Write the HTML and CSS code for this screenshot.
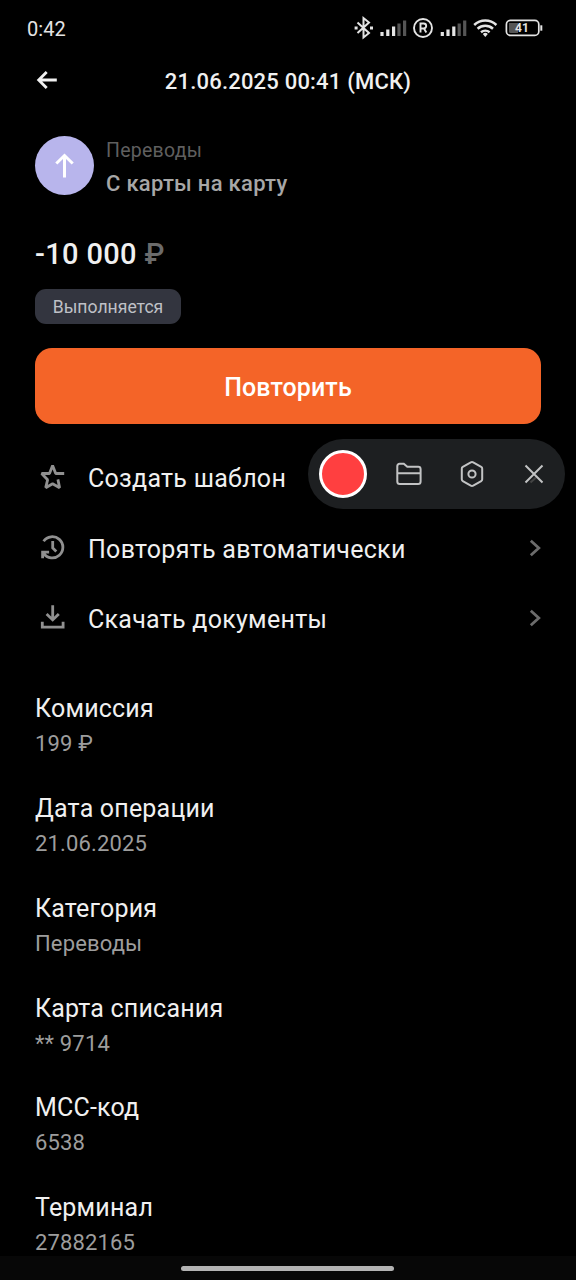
FILE: index.html
```html
<!DOCTYPE html>
<html lang="ru">
<head>
<meta charset="utf-8">
<title>С карты на карту</title>
<link rel="stylesheet" href="styles.css">
</head>
<body>
<div class="screen">
  <div class="status">
    <span class="clock">0:42</span>
    <svg class="status-icons" viewBox="354 14 190 28" fill="none" stroke="#e4e4e4">
      <path d="M357.500 22.500l11.500 10.500-5.500 4.500V18l5.500 4.500-11.500 10.500" stroke-width="2"/>
      <path d="M354.600 28h3M370 28h3" stroke-width="2.800"/>
      <path d="M382 32v4M387.800 29.500v6.500M393.600 26.500v9.500" stroke-width="3.200"/>
      <path d="M399 23.500v12.500M404.600 20.500v15.500" stroke="#555" stroke-width="3.200"/>
      <circle cx="423" cy="28" r="9" stroke-width="1.900"/>
      <path d="M420.500 32.500v-9h3.200a2.500 2.500 0 0 1 0 5h-3.200M424 28.500l2.300 4" stroke-width="1.900"/>
      <path d="M442.300 32v4M448 29.500v6.500M453.800 26.500v9.500" stroke-width="3.200"/>
      <path d="M459.200 23.500v12.500M464.700 20.500v15.500" stroke="#555" stroke-width="3.200"/>
      <path d="M474.200 25a16.200 16.200 0 0 1 22.200 0M477.600 28.800a11.500 11.500 0 0 1 15.400 0M481 32.300a6.800 6.800 0 0 1 8.600 0" stroke-width="2.500"/>
      <path d="M482.800 34l2.500 2.900 2.500-2.900a3.600 3.600 0 0 0-5 0z" fill="#e4e4e4" stroke="none"/>
      <rect x="506.400" y="20.400" width="32.400" height="15" rx="4" stroke-width="1.700"/>
      <path d="M509 23h9v10h-7.500a1.500 1.500 0 0 1-1.500-1.500z" fill="#555" stroke="none"/>
      <path d="M541.300 25.300v5.400" stroke-width="2"/>
      <text class="battery-text" x="522" y="32.300" text-anchor="middle">41</text>
    </svg>
  </div>
  <header class="header">
    <svg class="back" viewBox="0 0 22 20"><path d="M21.800 10H4.500M11.700 2L3.700 10l8 8"/></svg>
    <h1 class="title">21.06.2025 00:41 (МСК)</h1>
  </header>
  <section class="operation">
    <div class="avatar"><svg viewBox="0 0 20 26"><path d="M9.500 24.500V2.500M1.300 10.500L9.500 2.500l8.200 8"/></svg></div>
    <div class="operation-text">
      <div class="kind">Переводы</div>
      <div class="name">С карты на карту</div>
    </div>
  </section>
  <div class="amount">-10 000 <span class="currency">₽</span></div>
  <div class="pill">Выполняется</div>
  <button class="repeat">Повторить</button>
  <nav class="actions">
    <div class="action">
      <svg class="action-icon star" viewBox="0 0 28 28"><path d="M25.200 10.500h-8.500L13.600 2.600l-3.100 7.900H2.600l6 6.300-1.900 7.900 6.900-4 7 4-1.700-8.300"/></svg>
      <span class="action-label">Создать шаблон</span>
    </div>
    <div class="action">
      <svg class="action-icon" viewBox="0 0 28 28"><path d="M4.600 8.200a10.600 10.600 0 1 1 0 12.200M3.600 25.200v-6h6.500M13.700 8v7l3.600 3.500"/></svg>
      <span class="action-label">Повторять автоматически</span>
      <svg class="chevron" viewBox="0 0 12 18"><path d="M1.800 1.700L9.800 9l-8 7.300"/></svg>
    </div>
    <div class="action">
      <svg class="action-icon" viewBox="0 0 28 28"><path d="M13.700 2.300v14.200M7.600 11l6.100 5.900 6.100-5.900M3.300 18.800v5.400h20.800v-5.400"/></svg>
      <span class="action-label">Скачать документы</span>
      <svg class="chevron" viewBox="0 0 12 18"><path d="M1.800 1.700L9.800 9l-8 7.300"/></svg>
    </div>
  </nav>
  <dl class="details">
    <div class="detail"><dt>Комиссия</dt><dd>199 ₽</dd></div>
    <div class="detail"><dt>Дата операции</dt><dd>21.06.2025</dd></div>
    <div class="detail"><dt>Категория</dt><dd>Переводы</dd></div>
    <div class="detail"><dt>Карта списания</dt><dd>** 9714</dd></div>
    <div class="detail"><dt>МСС-код</dt><dd>6538</dd></div>
    <div class="detail"><dt>Терминал</dt><dd>27882165</dd></div>
  </dl>
  <footer class="home"><div class="home-bar"></div></footer>
  <div class="recorder">
    <span class="record"></span>
    <svg class="folder" viewBox="0 0 26 24"><path d="M1.300 11.300h23.300M1.300 19.500V4a2.200 2.200 0 0 1 2.200-2.200h4.300l3.500 3h10.900a2.400 2.400 0 0 1 2.400 2.400v12.300a2.500 2.500 0 0 1-2.500 2.500H3.800a2.500 2.500 0 0 1-2.500-2.500z"/></svg>
    <svg class="settings" viewBox="0 0 24 28"><path d="M10.800 2.300a2.400 2.400 0 0 1 2.400 0l8 4.600a2 2 0 0 1 1 1.800v10.600a2 2 0 0 1-1 1.800l-8 4.600a2.400 2.400 0 0 1-2.400 0l-8-4.600a2 2 0 0 1-1-1.800V8.700a2 2 0 0 1 1-1.800z"/><circle cx="12" cy="14" r="3.600"/></svg>
    <svg class="close" viewBox="0 0 20 20"><path d="M6.500 18.500l5.500-5" class="close-shade"/><path d="M1.500 1.500l17 17M18.500 1.500l-17 17"/></svg>
  </div>
</div>
</body>
</html>
```
FILE: styles.css
```css
* { box-sizing: border-box; }
body { margin: 0; background: #000; font-family: Roboto, "Noto Sans", sans-serif; }
svg { display: block; flex: none; }
.screen { position: relative; width: 576px; height: 1280px; overflow: hidden; background: #000; color: #f0f0f0; display: flex; flex-direction: column; }
.status { height: 56px; flex: none; display: flex; justify-content: space-between; padding: 14px 32px 0 27px; }
.clock { font-size: 20px; line-height: 30px; letter-spacing: 0.100px; color: #e4e4e4; }
.status-icons { width: 190px; height: 28px; }
.battery-text { font-size: 12px; font-weight: 700; fill: #e4e4e4; stroke: none; }
.header { height: 50px; flex: none; display: flex; align-items: center; padding: 0 35px; }
.back { width: 22px; height: 20px; margin-top: -2px; fill: none; stroke: #f0f0f0; stroke-width: 2.800; }
.title { flex: 1; margin: 2px 22px 0 0; text-align: center; font-size: 22px; font-weight: 500; letter-spacing: 0.200px; line-height: 30px; }
.operation { display: flex; flex: none; gap: 12px; height: 59px; margin: 30px 35px 0; }
.avatar { width: 59px; height: 59px; border-radius: 50%; background: #b8b5ec; display: flex; align-items: center; justify-content: center; }
.avatar svg { width: 20px; height: 26px; fill: none; stroke: #fff; stroke-width: 3; }
.kind { font-size: 19.500px; line-height: 29px; letter-spacing: 0.250px; color: #5f5f5f; }
.name { font-size: 22px; font-weight: 500; line-height: 30px; margin-top: 4px; letter-spacing: 0.280px; color: #a7a7a7; }
.amount { flex: none; margin: 39px 35px 0; font-size: 29px; line-height: 40px; font-weight: 500; letter-spacing: 0.350px; }
.currency { color: #6b6b6b; }
.pill { flex: none; margin: 15px 35px 0; width: 146px; height: 35px; border-radius: 11px; background: #33353f; color: #bfc0c6; font-size: 17.600px; line-height: 36px; text-align: center; }
.repeat { flex: none; margin: 24px 35px 0; height: 76px; border: 0; border-radius: 17px; background: #f46428; color: #fff; font: 500 25px/76px Roboto, "Noto Sans", sans-serif; padding: 2px 0 0; letter-spacing: 0.100px; }
.actions { flex: none; margin: 18px 35px 0; }
.action { height: 70.400px; display: flex; align-items: center; }
.action-icon { width: 28px; height: 28px; margin: 0 21px 1px 4px; fill: none; stroke: #909090; stroke-width: 2.800; }
.star { stroke-linejoin: bevel; }
.action-label { flex: 1; font-size: 25px; line-height: 32px; padding-top: 4px; letter-spacing: 0.270px; }
.chevron { width: 12px; height: 18px; fill: none; stroke: #6c6c6c; stroke-width: 2.800; }
.details { margin: 39px 35px 0; flex: none; height: 564px; overflow: hidden; }
.detail { height: 99.800px; }
.detail dt { font-size: 25px; line-height: 34px; letter-spacing: 0.200px; }
.detail dd { margin: 2px 0 0; font-size: 22px; line-height: 32px; letter-spacing: 0.150px; color: #9d9d9d; }
.home { position: absolute; left: 0; right: 0; bottom: 0; height: 24px; background: #070707; display: flex; justify-content: center; padding: 10px 1px 0 0; }
.home-bar { width: 213px; height: 5px; border-radius: 3px; background: #b3b3b3; }
.recorder { position: absolute; left: 308px; top: 439px; width: 257px; height: 70px; border-radius: 35px; background: #1d1f21; display: flex; align-items: center; padding-left: 11px; }
.recorder svg { fill: none; stroke: #c2c3c4; stroke-width: 2; }
.record { width: 48px; height: 48px; border-radius: 50%; border: 3px solid #fff; background: #ff3f40; }
.folder { width: 26px; height: 24px; margin-left: 29px; }
.settings { width: 24px; height: 28px; margin-left: 38px; }
.close { width: 20px; height: 20px; margin-left: 40px; }
.recorder .close-shade { stroke: #444; }
```
